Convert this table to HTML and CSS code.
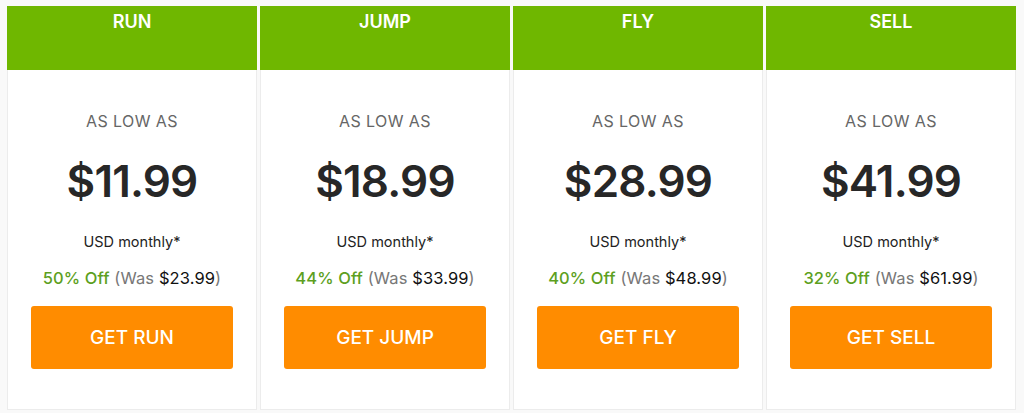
FILE: index.html
```html
<!DOCTYPE html>
<html lang="en">
<head>
<meta charset="utf-8">
<title>Pricing</title>
<link rel="stylesheet" href="styles.css">
</head>
<body>
<div class="plans">
  <div class="card">
    <div class="head">RUN</div>
    <div class="body">
      <div class="low">AS LOW AS</div>
      <div class="price">$11.99</div>
      <div class="per">USD monthly*</div>
      <div class="offer"><span class="off">50% Off</span> <span class="was">(Was <b>$23.99</b>)</span></div>
      <a class="btn" href="#">GET RUN</a>
    </div>
  </div>
  <div class="card">
    <div class="head">JUMP</div>
    <div class="body">
      <div class="low">AS LOW AS</div>
      <div class="price">$18.99</div>
      <div class="per">USD monthly*</div>
      <div class="offer"><span class="off">44% Off</span> <span class="was">(Was <b>$33.99</b>)</span></div>
      <a class="btn" href="#">GET JUMP</a>
    </div>
  </div>
  <div class="card">
    <div class="head">FLY</div>
    <div class="body">
      <div class="low">AS LOW AS</div>
      <div class="price">$28.99</div>
      <div class="per">USD monthly*</div>
      <div class="offer"><span class="off">40% Off</span> <span class="was">(Was <b>$48.99</b>)</span></div>
      <a class="btn" href="#">GET FLY</a>
    </div>
  </div>
  <div class="card">
    <div class="head">SELL</div>
    <div class="body">
      <div class="low">AS LOW AS</div>
      <div class="price">$41.99</div>
      <div class="per">USD monthly*</div>
      <div class="offer"><span class="off">32% Off</span> <span class="was">(Was <b>$61.99</b>)</span></div>
      <a class="btn" href="#">GET SELL</a>
    </div>
  </div>
</div>
</body>
</html>
```
FILE: styles.css
```css
* { box-sizing: border-box; }
html, body { margin: 0; padding: 0; background: #f9f9f9; }
body { font-family: "Inter", "Noto Sans", sans-serif; }
.plans {
  display: flex;
  gap: 3px;
  padding: 6px 0 0 7px;
}
.card {
  width: 250px;
  height: 404px;
  background: #fff;
  border: 1px solid #ececec;
  border-top: none;
  display: flex;
  flex-direction: column;
}
.head {
  height: 64px;
  margin: 0 -1px;
  background: #6fb700;
  color: #fff;
  font-size: 18px;
  font-weight: 600;
  line-height: 22px;
  padding-top: 5px;
  text-align: center;
}
.body {
  display: flex;
  flex-direction: column;
  align-items: center;
  padding: 0 23px;
}
.low {
  margin-top: 40px;
  font-size: 16px;
  line-height: 22px;
  color: #666;
  letter-spacing: 0.4px;
}
.price {
  margin-top: 22px;
  font-size: 44px;
  font-weight: 600;
  line-height: 54px;
  color: #272727;
  letter-spacing: -0.8px;
}
.per {
  margin-top: 24px;
  font-size: 14.5px;
  line-height: 20px;
  color: #222;
}
.offer {
  margin-top: 16px;
  font-size: 16.5px;
  line-height: 20px;
  color: #777;
  letter-spacing: 0.1px;
}
.off { color: #5d9f1e; font-weight: 500; }
.was b { color: #111; font-weight: 400; }
.btn {
  margin-top: 18px;
  width: 202px;
  height: 63px;
  background: #ff8c00;
  border-radius: 3px;
  color: #fff;
  text-decoration: none;
  font-size: 19px;
  font-weight: 500;
  display: flex;
  align-items: center;
  justify-content: center;
}
```
